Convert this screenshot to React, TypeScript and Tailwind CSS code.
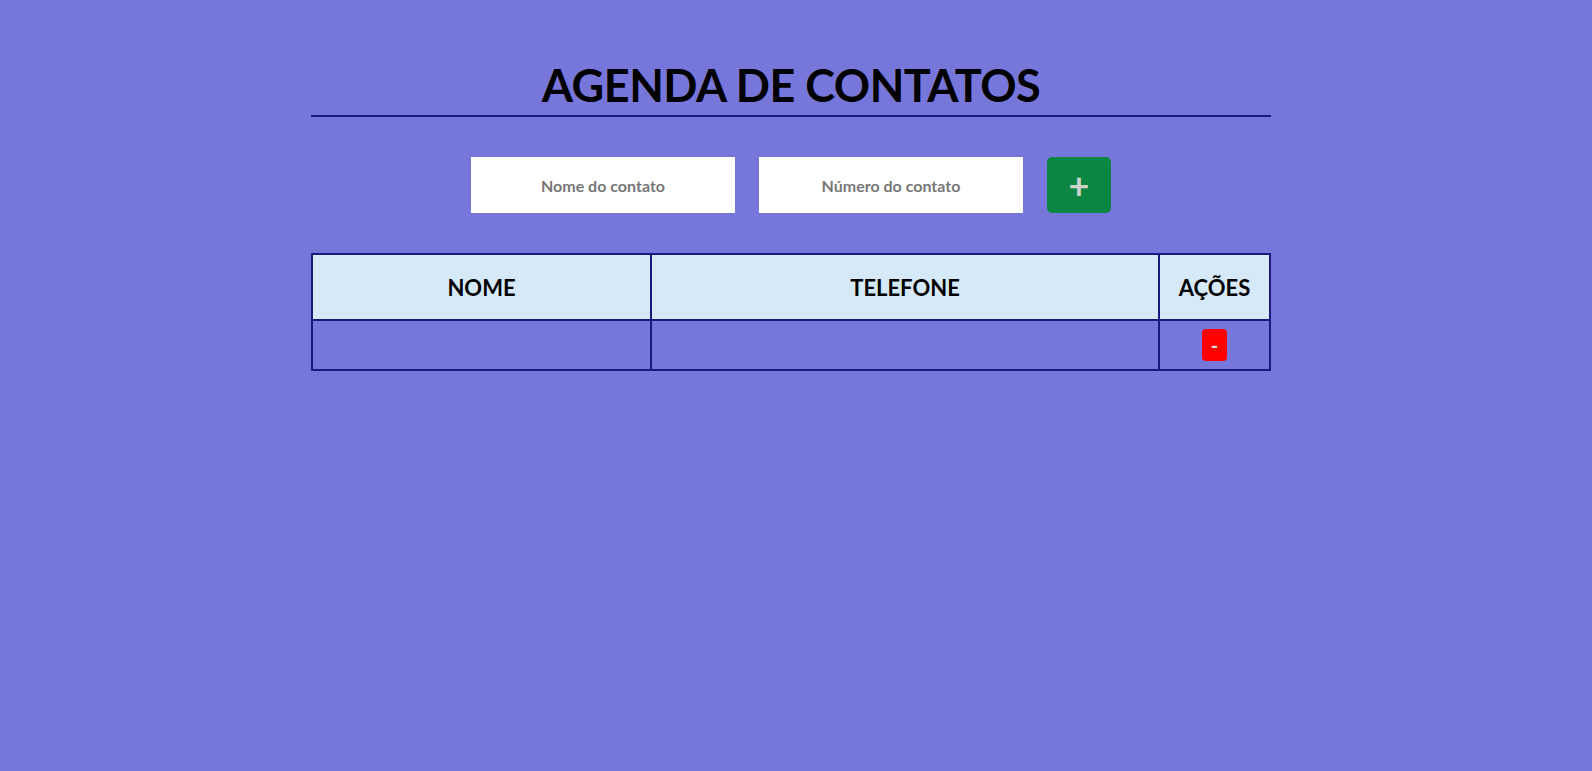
export default function App() {
  return (
    <div className="min-h-screen bg-[#7777db] pr-[10px] font-['Lato','Liberation_Sans',sans-serif] text-black">
      <div className="mx-auto w-[960px] pt-[57px]">
        <h1 className="border-b-2 border-[#1a1a7e] pb-[2px] text-center text-[45px] font-bold leading-[56px] tracking-[-0.5px]">
          AGENDA DE CONTATOS
        </h1>
        <form className="mt-[40px] flex justify-center gap-6">
          <input
            type="text"
            placeholder="Nome do contato"
            className="h-[56px] w-[264px] bg-white text-center text-[16px] font-bold outline-none placeholder:text-[#777]"
          />
          <input
            type="text"
            placeholder="Número do contato"
            className="h-[56px] w-[264px] bg-white text-center text-[16px] font-bold outline-none placeholder:text-[#777]"
          />
          <button
            type="button"
            className="h-[56px] w-[64px] rounded-[5px] bg-[#0b8743] text-[36px] font-bold leading-none text-[#cfd3cc]"
          >
            +
          </button>
        </form>
        <table className="mx-auto mt-[40px] w-[958px] table-fixed border-collapse border-2 border-[#1a1a7e]">
          <colgroup>
            <col className="w-[339px]" />
            <col className="w-[508px]" />
            <col className="w-[111px]" />
          </colgroup>
          <thead>
            <tr className="h-[66px] bg-[#d6e9f8]">
              <th className="border-2 border-[#1a1a7e] text-[22px] font-bold">NOME</th>
              <th className="border-2 border-[#1a1a7e] text-[22px] font-bold">TELEFONE</th>
              <th className="border-2 border-[#1a1a7e] text-[22px] font-bold">AÇÕES</th>
            </tr>
          </thead>
          <tbody>
            <tr className="h-[50px]">
              <td className="border-2 border-[#1a1a7e]"></td>
              <td className="border-2 border-[#1a1a7e]"></td>
              <td className="border-2 border-[#1a1a7e] text-center">
                <button
                  type="button"
                  className="inline-flex h-[32px] w-[25px] items-center justify-center rounded-[4px] bg-[#ff0000] text-[20px] font-bold text-[#d9d9d9]"
                >
                  -
                </button>
              </td>
            </tr>
          </tbody>
        </table>
      </div>
    </div>
  );
}
